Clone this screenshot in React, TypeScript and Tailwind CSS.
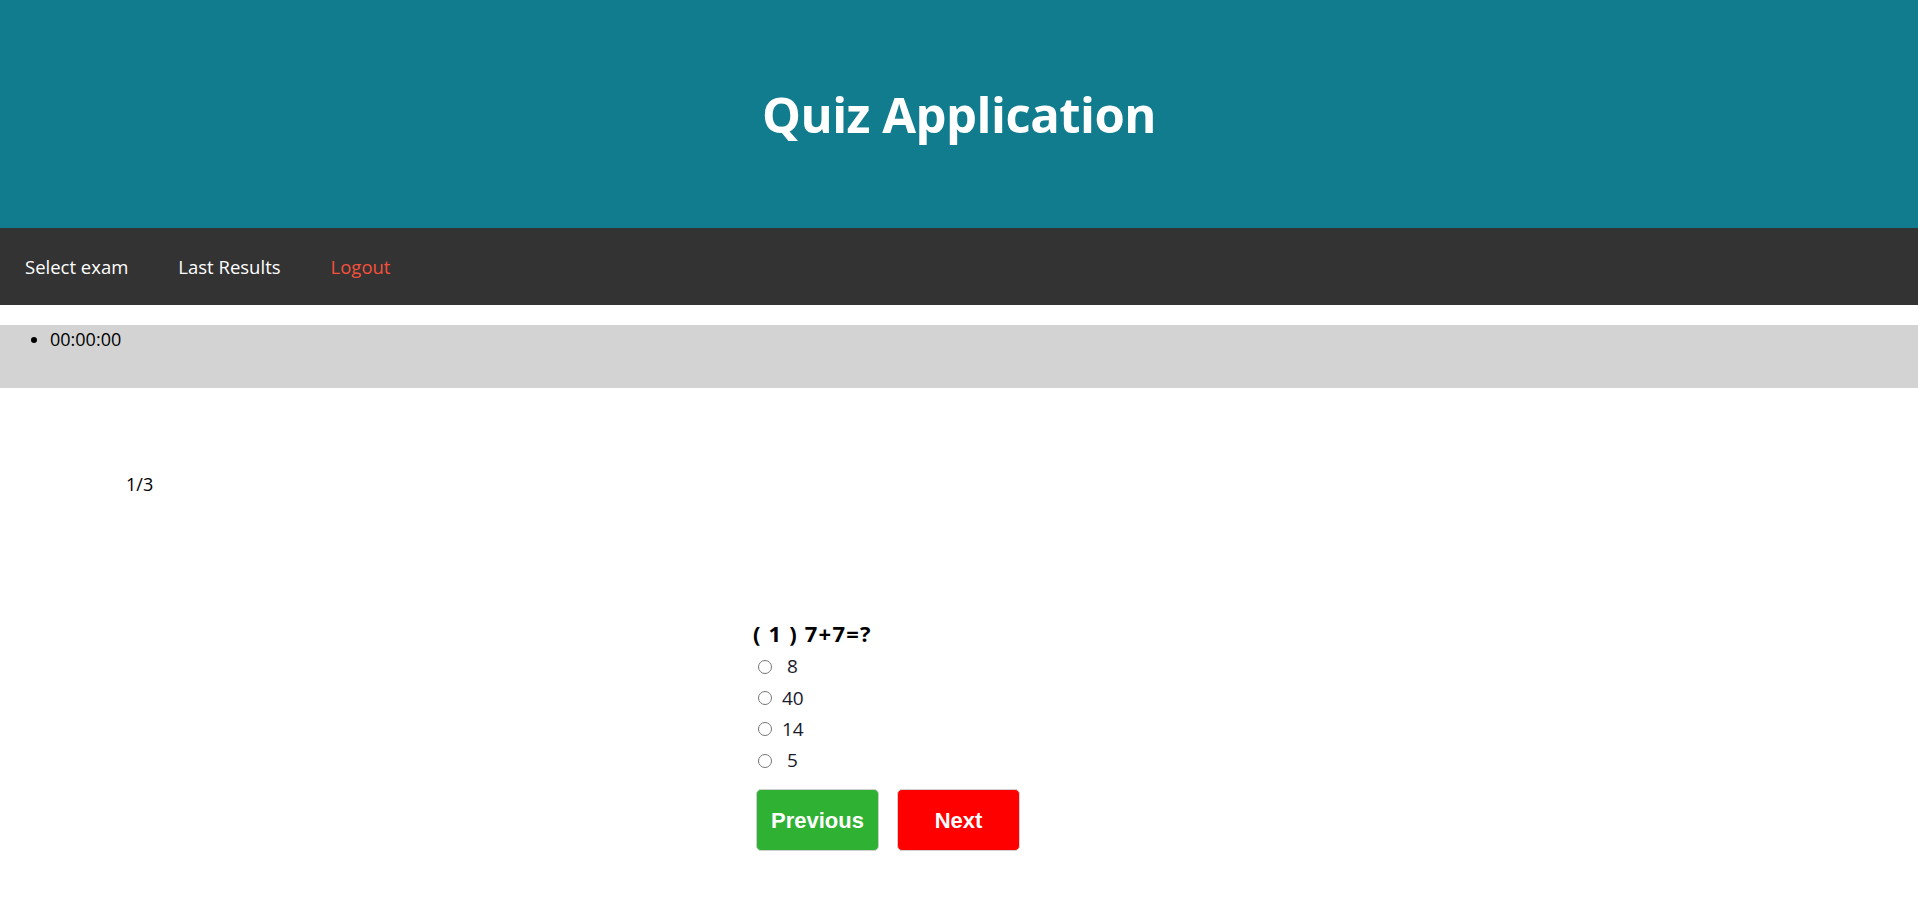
import React from "react";

export default function App() {
  const options = ["\u00a08", "40", "14", "\u00a05"];
  return (
    <div className="min-h-screen bg-white text-black" style={{ fontFamily: '"Open Sans", "Noto Sans", sans-serif' }}>
      <header className="h-[228px] bg-[#127c8f] flex items-center justify-center">
        <h1 className="text-white font-bold text-[49px] leading-none tracking-[-0.5px]">Quiz Application</h1>
      </header>
      <nav className="h-[77px] bg-[#333333] flex items-center pl-[25px] gap-[50px] text-[18.5px]">
        <span className="text-white">Select exam</span>
        <span className="text-white">Last Results</span>
        <span className="text-[#f5503b]">Logout</span>
      </nav>
      <div className="h-[20px]" />
      <div className="h-[63px] bg-[#d3d3d3]">
        <ul className="list-disc pl-[50px] text-[18px] leading-[28px]">
          <li>00:00:00</li>
        </ul>
      </div>
      <div className="pl-[126px] mt-[82px] text-[18px] leading-[28px]">1/3</div>
      <div className="pl-[753px] mt-[121px]">
        <div className="font-bold text-[22px] leading-[28px] mb-[4px] tracking-[1.2px]">( 1 ) 7+7=?</div>
        {options.map((o, i) => (
          <label key={i} className="flex items-center h-[31.3px] text-[19px] text-[#1a1a2e]">
            <input type="radio" name="q1" className="ml-[5px] mr-[10px] w-[14px] h-[14px]" />
            <span>{o}</span>
          </label>
        ))}
        <div className="flex gap-[18px] mt-[13px] ml-[3px]" style={{ fontFamily: '"Liberation Sans", Arial, sans-serif' }}>
          <button className="w-[123px] h-[62px] rounded-[5px] border border-[#cfcfcf] bg-[#2fb134] text-white font-bold text-[22px]">Previous</button>
          <button className="w-[123px] h-[62px] rounded-[5px] border border-[#cfcfcf] bg-[#ff0000] text-white font-bold text-[22px]">Next</button>
        </div>
      </div>
    </div>
  );
}
